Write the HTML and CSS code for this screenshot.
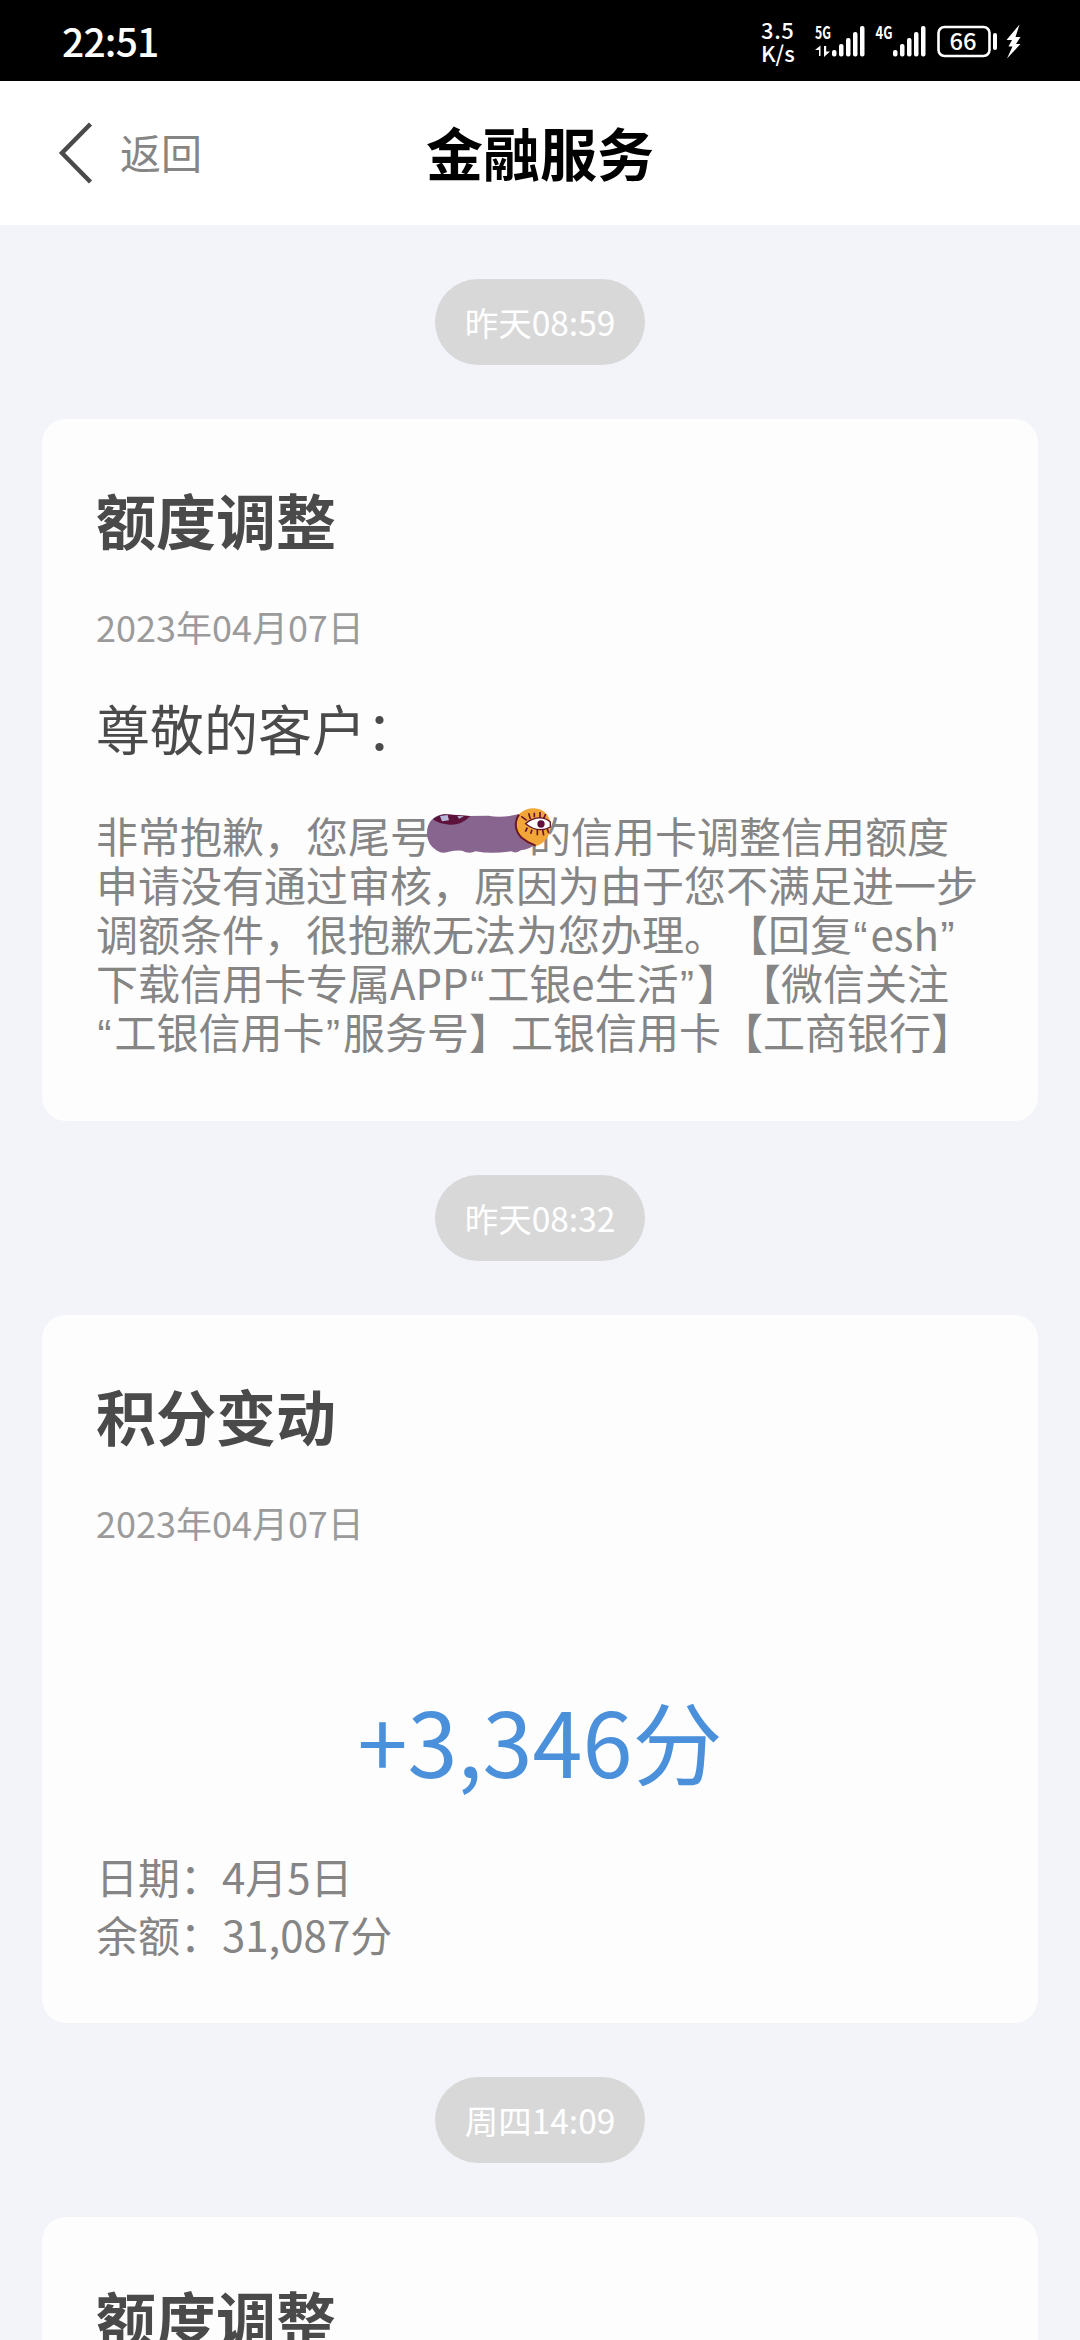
FILE: index.html
```html
<!DOCTYPE html>
<html lang="zh-CN">
<head>
<meta charset="utf-8">
<title>金融服务</title>
<link rel="stylesheet" href="styles.css">
</head>
<body>
<div class="status">
  <span class="clock">22:51</span>
  <div class="status-icons">
    <div class="speed"><span class="rate">3.5</span><span>K/s</span></div>
    <svg class="signals" width="112" height="40" viewBox="812 20 112 40" fill="#fff">
      <text x="815" y="38" class="net" textLength="16" lengthAdjust="spacingAndGlyphs">5G</text>
      <path d="M819 55V49H815L820.5 44.500V55zM824 45H826.200V50.500H830L824 56z"/>
      <rect x="832" y="49" width="4.500" height="6.500" rx="2"/><rect x="839" y="43" width="4.500" height="12.500" rx="2"/><rect x="846" y="37" width="4.500" height="18.500" rx="2"/><rect x="853" y="31" width="4.500" height="24.500" rx="2"/><rect x="860" y="25" width="4.500" height="30.500" rx="2"/>
      <text x="875.500" y="38" class="net" textLength="17" lengthAdjust="spacingAndGlyphs">4G</text>
      <rect x="893" y="49" width="4.500" height="6.500" rx="2"/><rect x="900" y="43" width="4.500" height="12.500" rx="2"/><rect x="907" y="37" width="4.500" height="18.500" rx="2"/><rect x="914" y="31" width="4.500" height="24.500" rx="2"/><rect x="921" y="25" width="4.500" height="30.500" rx="2"/>
    </svg>
    <svg class="battery" width="90" height="40" viewBox="936 20 90 40" fill="#fff">
      <rect x="938.500" y="26" width="51" height="29" rx="6" fill="none" stroke="#fff" stroke-width="2.600"/>
      <rect x="993" y="32" width="4" height="17" rx="2"/>
      <text x="949.500" y="48.700" class="level" textLength="27" lengthAdjust="spacingAndGlyphs">66</text>
      <path d="M1019.500 23.500L1006.500 39H1012L1008.500 45.500H1012.500L1007 57.500L1020.500 43H1016L1020.500 36H1015.500z"/>
    </svg>
  </div>
</div>
<header class="nav">
  <div class="back">
    <svg width="36" height="62" viewBox="0 0 36 62" fill="none" stroke="#4a4a4a" stroke-width="4.500"><path d="M32.500 2L4 31L32.500 60"/></svg>
    <span>返回</span>
  </div>
  <h1 class="nav-title">金融服务</h1>
</header>
<main class="feed">
  <time class="stamp">昨天08:59</time>
  <article class="card">
    <h2 class="title">额度调整</h2>
    <p class="date">2023年04月07日</p>
    <p class="greeting">尊敬的客户：</p>
    <div class="message">
      <p>非常抱歉，您尾号<span class="mask"><svg width="130" height="50" viewBox="75 45 390 150">
        <path fill="#87658e" d="M81 130C80 96 104 74 133 73L205 78L265 77Q305 85 355 73L410 160Q391 178 362 181Q349 192 334 184Q273 193 227 184Q207 193 186 182Q164 181 146 185Q127 193 111 182Q82 166 81 130z"/>
        <path fill="#5d123b" d="M99 88Q119 73 137 73L211 78Q186 105 150 104Q116 103 99 88z"/>
        <path fill="#b4b7d8" d="M120 78L143 75L147 91L126 94zM172 78L192 79L177 86z"/>
        <path fill="#f3a638" d="M346 109C342 77 369 55 402 55C431 56 449 75 453 104C452 139 430 165 405 169C374 157 349 141 346 109z"/>
        <path fill="none" stroke="#65152f" stroke-width="6" d="M357 74C340 98 347 126 365 143Q382 158 407 167"/>
        <g fill="none" stroke="#65152f" stroke-width="5"><path d="M364 79L380 91M386 70L391 87M403 68V82M420 66V82M437 72L431 86M382 113L376 125M396 119L392 131M412 120V136M428 119L431 136M441 115L446 129"/><path fill="#fff" stroke-width="4" d="M377 101Q392 86 419 83Q439 85 451 96V111Q414 131 377 101z"/></g>
        <circle cx="423" cy="102" r="11" fill="#60103b"/>
      </svg></span>的信用卡调整信用额度</p>
      <p>申请没有通过审核，原因为由于您不满足进一步</p>
      <p>调额条件，很抱歉无法为您办理。【回复<q>“</q>esh<q>”</q></p>
      <p>下载信用卡专属APP<q>“</q>工银e生活<q>”</q>】【微信关注</p>
      <p><q>“</q>工银信用卡<q>”</q>服务号】工银信用卡【工商银行】</p>
    </div>
  </article>
  <time class="stamp">昨天08:32</time>
  <article class="card">
    <h2 class="title">积分变动</h2>
    <p class="date">2023年04月07日</p>
    <p class="amount">+3,346分</p>
    <div class="details">
      <p>日期：4月5日</p>
      <p>余额：31,087分</p>
    </div>
  </article>
  <time class="stamp">周四14:09</time>
  <article class="card">
    <h2 class="title">额度调整</h2>
  </article>
</main>
</body>
</html>
```
FILE: styles.css
```css
* { box-sizing: border-box; margin: 0; padding: 0; }
body {
  width: 1080px;
  height: 2340px;
  overflow: hidden;
  display: flex;
  flex-direction: column;
  background: #f3f4fa;
  font-family: "Noto Sans CJK SC", sans-serif;
  text-spacing-trim: space-all;
}
.status {
  flex: none;
  height: 81px;
  padding: 0 54px 0 62px;
  display: flex;
  justify-content: space-between;
  align-items: center;
  background: #000;
  color: #fff;
}
.clock { font-size: 39px; font-weight: 500; letter-spacing: -.8px; line-height: 81px; }
.status-icons { display: flex; align-items: center; }
.speed {
  display: flex;
  flex-direction: column;
  width: 51px;
  font: 500 22px/23px "Noto Sans CJK SC", sans-serif;
}
.rate { letter-spacing: .6px; }
.signals { margin-right: 12px; overflow: visible; }
.net { font: 700 17px "Noto Sans CJK SC", sans-serif; }
.level { font: 500 23px "Noto Sans CJK SC", sans-serif; }
.nav {
  flex: none;
  height: 144px;
  padding: 0 58px;
  display: grid;
  grid-template-columns: 1fr auto 1fr;
  align-items: center;
  background: #fff;
}
.back { display: flex; align-items: center; gap: 26px; font-size: 41px; line-height: 56px; color: #858585; }
.back span { margin-top: -4px; }
.nav-title { font-size: 57px; line-height: 80px; font-weight: 700; color: #000; margin-top: -4px; }
.feed {
  flex: 1;
  padding: 54px 42px 0;
  display: flex;
  flex-direction: column;
  align-items: center;
  gap: 54px;
}
.stamp {
  flex: none;
  width: 210px;
  height: 86px;
  border-radius: 43px;
  background: #d8d8d8;
  color: #fff;
  font-size: 33.500px;
  line-height: 85px;
  text-align: center;
}
.card {
  flex: none;
  width: 996px;
  padding: 58px 54px 60px;
  border-radius: 24px;
  background: #fdfdfd;
}
.card:first-of-type { padding-bottom: 66px; }
.title { font-size: 60px; line-height: 84px; font-weight: 700; color: #4a4a4a; }
.date { margin-top: 40px; font-size: 36px; line-height: 50px; color: #9b9b9b; }
.greeting { margin-top: 39px; font-size: 54px; line-height: 76px; color: #4a4a4a; }
.message { margin-top: 44px; font-size: 42px; line-height: 49px; color: #858585; white-space: nowrap; }
.message p { height: 49px; }
.message q { quotes: none; padding: 0 3px 0 1.500px; font-family: "Liberation Sans", sans-serif; line-height: 0; }
.mask { position: relative; display: inline-block; width: 97px; height: 20px; }
.mask svg { position: absolute; left: -7px; top: -28px; }
.amount { margin-top: 132px; font-size: 90px; line-height: 120px; text-align: center; color: #4a90db; }
.details { margin-top: 48px; font-size: 42px; line-height: 58px; color: #858585; }
```
